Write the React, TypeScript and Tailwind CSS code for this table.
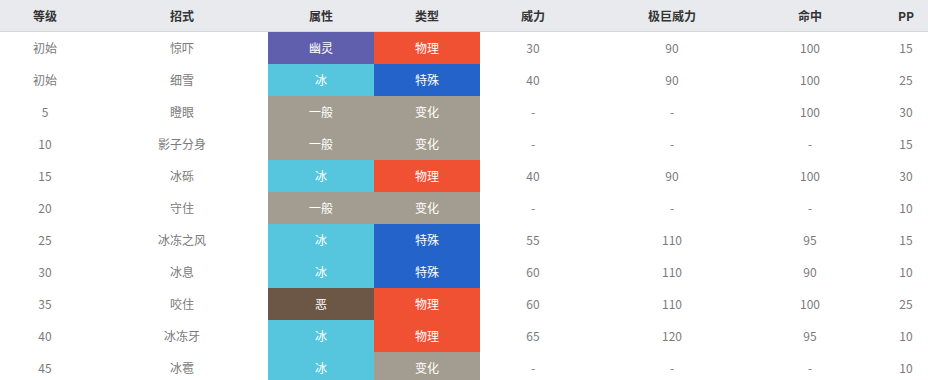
const typeColor: Record<string, string> = {
  幽灵: "bg-[#5f5fae]",
  冰: "bg-[#55c6de]",
  一般: "bg-[#a39d91]",
  恶: "bg-[#6c5646]",
};

const catColor: Record<string, string> = {
  物理: "bg-[#ef5132]",
  特殊: "bg-[#2463c9]",
  变化: "bg-[#a39d91]",
};

const moves = [
  ["初始", "惊吓", "幽灵", "物理", "30", "90", "100", "15"],
  ["初始", "细雪", "冰", "特殊", "40", "90", "100", "25"],
  ["5", "瞪眼", "一般", "变化", "-", "-", "100", "30"],
  ["10", "影子分身", "一般", "变化", "-", "-", "-", "15"],
  ["15", "冰砾", "冰", "物理", "40", "90", "100", "30"],
  ["20", "守住", "一般", "变化", "-", "-", "-", "10"],
  ["25", "冰冻之风", "冰", "特殊", "55", "110", "95", "15"],
  ["30", "冰息", "冰", "特殊", "60", "110", "90", "10"],
  ["35", "咬住", "恶", "物理", "60", "110", "100", "25"],
  ["40", "冰冻牙", "冰", "物理", "65", "120", "95", "10"],
  ["45", "冰雹", "冰", "变化", "-", "-", "-", "10"],
];

const cols = "grid grid-cols-[90px_178px_106px_106px_106px_172px_104px_88px]";

export default function App() {
  return (
    <div className="w-[928px] h-[380px] overflow-hidden bg-white font-['Noto_Sans_CJK_SC','Liberation_Sans',sans-serif] text-[12px]">
      <div className="w-[950px]">
        <div className={`${cols} h-[32px] items-center border-b border-[#d4d7dc] bg-[#e8eaee] font-bold text-[#333]`}>
          <div className="text-center">等级</div>
          <div className="pl-[6px] text-center">招式</div>
          <div className="text-center">属性</div>
          <div className="text-center">类型</div>
          <div className="text-center">威力</div>
          <div className="text-center">极巨威力</div>
          <div className="text-center">命中</div>
          <div className="text-center">PP</div>
        </div>
        {moves.map((m, i) => (
          <div key={i} className={`${cols} h-[32px] items-center text-[#7a7a7a]`}>
            <div className="text-center">{m[0]}</div>
            <div className="pl-[6px] text-center">{m[1]}</div>
            <div className={`flex h-full items-center justify-center text-white ${typeColor[m[2]]}`}>{m[2]}</div>
            <div className={`flex h-full items-center justify-center text-white ${catColor[m[3]]}`}>{m[3]}</div>
            <div className="text-center">{m[4]}</div>
            <div className="text-center">{m[5]}</div>
            <div className="text-center">{m[6]}</div>
            <div className="text-center">{m[7]}</div>
          </div>
        ))}
      </div>
    </div>
  );
}
